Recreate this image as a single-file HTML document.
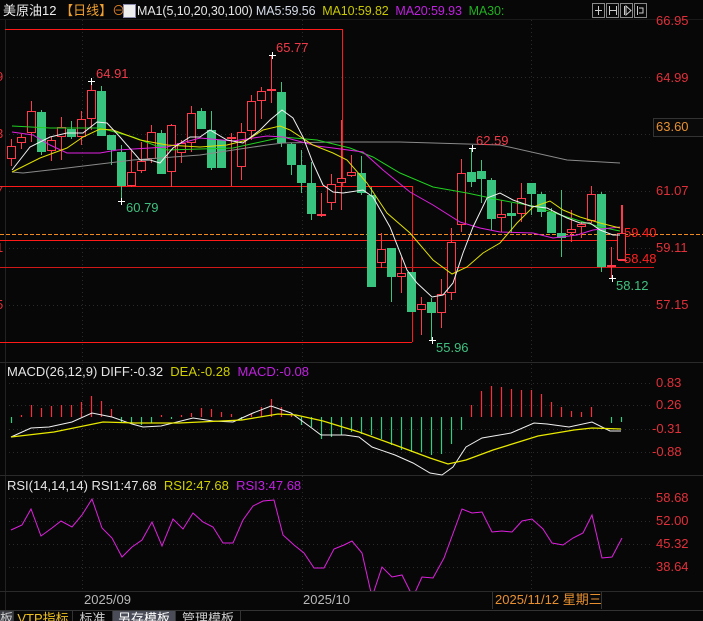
<!DOCTYPE html>
<html><head><meta charset="utf-8"><style>
html,body{margin:0;padding:0;background:#070707;width:703px;height:621px;overflow:hidden}
body{position:relative;font-family:"Liberation Sans","Noto Sans CJK SC",sans-serif}
.t{position:absolute;white-space:nowrap;font-size:12px;line-height:14px}
.tab{position:absolute;top:611px;height:12px;font-size:13px;line-height:16px;color:#ccc;border-right:1px solid #333;text-align:center;overflow:hidden}
</style></head><body>
<svg id="s" width="703" height="621" style="position:absolute;left:0;top:0" xmlns="http://www.w3.org/2000/svg"></svg>

<div class="t" style="left:3px;top:4px;color:#eee;font-size:13px">美原油12 <span style="color:#f0a030">【日线】</span><span style="color:#e08020">⊖</span></div>
<div style="position:absolute;left:123px;top:4px;width:11px;height:12px;background:#eee;border:1px solid #88a"></div>
<div class="t" style="left:137px;top:4px;font-size:12.5px;letter-spacing:-0.1px"><span style="color:#e6e6e6">MA1(5,10,20,30,100)</span> <span style="color:#d6dce8">MA5:59.56</span>&nbsp;&nbsp;<span style="color:#c8c800">MA10:59.82</span>&nbsp;&nbsp;<span style="color:#c020e0">MA20:59.93</span>&nbsp;&nbsp;<span style="color:#20b020">MA30:</span></div>

<div class="t" style="left:656px;top:14px;color:#e0303a;font-size:13px">66.95</div>
<div class="t" style="left:656px;top:71px;color:#e0303a;font-size:13px">64.99</div>
<div style="position:absolute;left:653px;top:118px;width:50px;height:17px;border:1px solid #333;background:#0a0a0a"></div>
<div class="t" style="left:656px;top:120px;color:#e89030;font-size:13px">63.60</div>
<div class="t" style="left:656px;top:184px;color:#e0303a;font-size:13px">61.07</div>
<div class="t" style="left:656px;top:241px;color:#e0303a;font-size:13px">59.11</div>
<div class="t" style="left:656px;top:298px;color:#e0303a;font-size:13px">57.15</div>
<div class="t" style="left:624px;top:226px;color:#ff2020;font-size:13px">59.40</div>
<div class="t" style="left:624px;top:252px;color:#ff2020;font-size:13px">58.48</div>
<div class="t" style="left:616px;top:279px;color:#40c080;font-size:13px">58.12</div>
<div class="t" style="left:96px;top:67px;color:#f03a4a;font-size:13px">64.91</div>
<div class="t" style="left:276px;top:41px;color:#f03a4a;font-size:13px">65.77</div>
<div class="t" style="left:126px;top:201px;color:#40c080;font-size:13px">60.79</div>
<div class="t" style="left:476px;top:134px;color:#f03a4a;font-size:13px">62.59</div>
<div class="t" style="left:436px;top:341px;color:#40c080;font-size:13px">55.96</div>

<div class="t" style="left:7px;top:365px;font-size:13px"><span style="color:#e6e6e6">MACD(26,12,9) DIFF:-0.32</span>&nbsp;&nbsp;<span style="color:#d0d000">DEA:-0.28</span>&nbsp;&nbsp;<span style="color:#c020e0">MACD:-0.08</span></div>
<div class="t" style="left:656px;top:376px;color:#e0303a;font-size:13px">0.83</div>
<div class="t" style="left:656px;top:398px;color:#e0303a;font-size:13px">0.26</div>
<div class="t" style="left:652px;top:422px;color:#e0303a;font-size:13px">-0.31</div>
<div class="t" style="left:652px;top:445px;color:#e0303a;font-size:13px">-0.88</div>

<div class="t" style="left:7px;top:479px;font-size:13px"><span style="color:#e6e6e6">RSI(14,14,14) RSI1:47.68</span>&nbsp;&nbsp;<span style="color:#d0d000">RSI2:47.68</span>&nbsp;&nbsp;<span style="color:#c020e0">RSI3:47.68</span></div>
<div class="t" style="left:656px;top:491px;color:#e0303a;font-size:13px">58.68</div>
<div class="t" style="left:656px;top:514px;color:#e0303a;font-size:13px">52.00</div>
<div class="t" style="left:656px;top:537px;color:#e0303a;font-size:13px">45.32</div>
<div class="t" style="left:656px;top:560px;color:#e0303a;font-size:13px">38.64</div>

<div class="t" style="left:84px;top:593px;color:#b8b8b8;font-size:13px">2025/09</div>
<div class="t" style="left:303px;top:593px;color:#b8b8b8;font-size:13px">2025/10</div>
<div style="position:absolute;left:492px;top:592px;width:108px;height:17px;border-left:1px solid #333;border-right:1px solid #333"></div>
<div class="t" style="left:495px;top:593px;color:#e89030;font-size:13px">2025/11/12 星期三</div>

<div class="tab" style="left:0;width:13px;background:#3a3c44">板</div>
<div class="tab" style="left:14px;width:58px;color:#f0c020">VTP指标</div>
<div class="tab" style="left:73px;width:39px">标准</div>
<div class="tab" style="left:113px;width:62px;background:#4a4d58;color:#fff">另存模板</div>
<div class="tab" style="left:176px;width:64px">管理模板</div>

<script>
var s=document.getElementById('s'),h='';
function L(x1,y1,x2,y2,c,w,d){h+='<line x1="'+x1+'" y1="'+y1+'" x2="'+x2+'" y2="'+y2+'" stroke="'+c+'" stroke-width="'+(w||1)+'"'+(d?' stroke-dasharray="'+d+'"':'')+'/>';}
function P(pts,c,w){h+='<polyline fill="none" stroke="'+c+'" stroke-width="'+(w||1)+'" points="'+pts+'"/>';}
[77,134,191,248,305,383,405,429,452,498,521,544,567].forEach(function(y){L(5,y+.5,652,y+.5,'#2a2a2a',1,'1,3');});
[82,302,531].forEach(function(x){L(x+.5,20,x+.5,591,'#2a2a2a',1,'1,3');});
L(5.5,20,5.5,611,'#222');
L(0,362.5,703,362.5,'#2a2a2a');L(0,475.5,703,475.5,'#2a2a2a');L(0,591.5,703,591.5,'#2a2a2a');L(0,610.5,703,610.5,'#333');
L(0,19.5,703,19.5,'#1a1a1a');
L(5,29.5,342,29.5,'#ff1a1a');L(342.5,29,342.5,186,'#ff1a1a');
L(0,186.5,412,186.5,'#ff1a1a');L(412.5,186,412.5,342,'#ff1a1a');L(0,342.5,412,342.5,'#ff1a1a');
L(0,240.5,622,240.5,'#ff1a1a');L(0,267.5,654,267.5,'#d01818');
L(0,234.5,703,234.5,'#f08a20',1,'4,2');
L(622.5,205,622.5,260,'#ff3a4a');L(618,260.5,627,260.5,'#ff3a4a');
var C=[['r',146,159,139,166],['r',137,143,134,149],['r',111,133,101,142],['g',112,152,110,155],['r',140,151,137,161],['r',127,137,117,160],['g',129,137,121,139],['r',119,137,111,145],['r',90,119,81,130],['g',91,136,86,136],
['g',135,150,135,165],['g',152,186,145,201],['r',172,186,150,187],['r',161,171,142,173],['r',132,159,125,163],['g',133,174,130,174],['r',125,172,124,187],['r',143,153,140,163],['r',113,143,106,152],['g',111,129,108,129],
['g',130,168,111,170],['g',140,168,140,168],['r',137,138,133,186],['r',132,167,123,180],['r',101,131,95,140],['r',91,101,87,119],['r',89,90,55,103],['g',92,143,82,147],['g',144,165,143,175],['g',165,183,150,193],
['g',183,214,162,220],['r',214,215,193,217],['r',184,203,174,210],['r',178,183,120,210],['r',172,176,155,177],['g',173,193,156,195],['g',195,287,187,287],['r',249,263,233,268],['g',248,277,248,302],['r',273,277,257,293],
['g',272,312,272,312],['r',304,310,297,335],['g',302,313,298,340],['r',294,313,279,328],['r',242,293,228,300],['r',173,225,159,232],['g',172,182,148,187],['g',171,179,160,203],['g',180,219,178,230],['r',214,218,200,232],
['g',213,216,203,233],['r',198,214,183,222],['g',183,194,183,215],['g',194,212,192,217],['g',212,233,208,233],['g',233,238,190,257],['r',229,233,210,242],['r',224,227,222,238],['r',194,221,186,223],['g',194,267,192,272],
['r',265,267,247,278],['r',233,260,205,260]];
C.forEach(function(c,i){var x=11+i*10;var col=c[0]=='r'?'#ff3a4a':'#38c47e';
 L(x+.5,c[3],x+.5,c[4],col);
 var bh=Math.max(1,c[2]-c[1]);
 if(c[0]=='r'){ if(bh<=2) h+='<rect x="'+(x-4)+'" y="'+c[1]+'" width="9" height="2" fill="'+col+'"/>'; else h+='<rect x="'+(x-3.5)+'" y="'+(c[1]+.5)+'" width="8" height="'+(bh-1)+'" fill="#070707" stroke="'+col+'"/>';}
 else h+='<rect x="'+(x-4)+'" y="'+c[1]+'" width="9" height="'+bh+'" fill="'+col+'"/>';
});
[[91,81],[272,55],[121,201],[472,148],[432,340],[612,278]].forEach(function(p){L(p[0]-3,p[1]+.5,p[0]+4,p[1]+.5,'#fff');L(p[0]+.5,p[1]-3,p[0]+.5,p[1]+4,'#fff');});
P('12,172 23,173 67,168 133,160 200,155 267,145 283,143 333,142 400,142 500,145 567,160 620,163','#8a8a8a');
P('12,126 50,128 100,128 133,137 167,150 233,148 283,137 317,140 350,148 373,157 400,173 433,187 467,193 500,200 533,206 567,217 600,227 620,231','#20d020');
P('12,132 33,135 50,145 67,153 100,153 117,150 167,147 200,138 233,141 267,136 283,137 317,146 333,148 363,152 383,170 410,192 433,205 460,222 480,228 500,232 533,233 553,238 577,235 593,230 620,227','#e020e0');
P('12,172 40,158 67,148 83,137 100,129 113,130 140,140 167,145 200,147 227,145 247,140 263,130 280,126 290,130 313,145 333,153 347,160 367,183 387,213 410,233 433,260 452,274 467,267 483,253 500,243 517,223 533,207 550,201 563,210 580,217 600,223 620,228','#e0e000');
P('12,170 30,147 50,137 67,133 83,133 97,122 107,123 120,137 140,160 150,160 160,163 173,148 190,137 200,137 210,130 227,140 243,143 260,130 270,120 282,110 293,118 303,137 313,163 323,185 333,192 343,193 363,190 373,197 390,227 407,270 417,283 432,297 443,295 453,283 463,253 473,227 487,198 500,193 513,200 530,206 547,208 567,218 580,223 590,223 600,230 613,235 620,235','#f0f0f0');
var M=[-6,2,12,9,11,12,12,15,21,16,8,-6,-6,-8,-6,2,-2,2,4,9,8,5,3,-3,3,10,18,10,3,-8,-10,-22,-20,-18,-15,-17,-18,-22,-28,-33,-35,-35,-38,-37,-27,-13,12,26,31,30,28,27,27,23,15,10,6,5,10,0,-6,-5];
M.forEach(function(v,i){var x=11+i*10+.5;if(v>0)L(x,417-v,x,417,'#ff2a40',1.2);else if(v<0)L(x,417,x,417-v,'#2ed080',1.2);});
P('11,437 31,428 49,427 72,422 92,413 112,417 132,424 143,427 161,426 173,423 193,418 213,421 233,422 253,413 271,406 291,413 309,426 321,435 345,435 359,437 372,447 395,455 413,463 430,473 442,475 453,467 466,447 482,438 511,433 534,423 547,424 569,427 592,422 610,431 621,431','#f0f0f0');
P('11,437 54,432 103,422 135,423 179,423 242,420 278,414 296,415 323,421 359,432 395,445 430,458 448,464 466,460 493,450 538,436 574,430 592,428 621,429','#e8e800',1.3);
h+='<clipPath id="c"><rect x="0" y="476" width="703" height="115"/></clipPath>';
h+='<g clip-path="url(#c)">';
P('11,530 22,525 31,509 41,536 52,528 61,521 72,527 82,515 92,499 102,528 112,538 122,557 132,547 142,540 152,522 162,546 173,519 183,529 193,513 203,522 213,527 223,543 233,543 243,520 253,506 263,501 274,500 283,535 294,545 304,553 314,568 324,568 334,549 344,545 352,541 362,553 372,597 382,567 392,577 402,575 413,597 422,577 433,578 444,558 462,509 472,513 482,512 492,532 502,531 512,532 522,521 532,519 543,529 552,543 563,545 573,538 583,533 592,515 602,558 612,557 622,538','#e020e0');
h+='</g>';
[592,606,620,634].forEach(function(x){h+='<rect x="'+x+'.5" y="3.5" width="12" height="14" fill="none" stroke="#888"/>';});
L(598.5,6,598.5,15,'#ccc');L(595,10.5,602,10.5,'#ccc');
L(610,10.5,616,10.5,'#ccc');L(609.5,6,609.5,15,'#ccc');L(616.5,6,616.5,15,'#ccc');
h+='<path d="M624.5 6 V15 M626 6 L631 10.5 L626 15Z" stroke="#ccc" fill="none"/>';
h+='<path d="M637.5 6 V15 M639 8 H643 V13 H639" stroke="#ccc" fill="none"/>';
s.innerHTML=h;
</script>
<div class="t" style="left:-4px;top:70px;color:#e0303a;font-size:13px">9</div>
<div class="t" style="left:-4px;top:127px;color:#e0303a;font-size:13px">3</div>
<div class="t" style="left:-4px;top:184px;color:#e0303a;font-size:13px">7</div>
<div class="t" style="left:-4px;top:241px;color:#e0303a;font-size:13px">1</div>
<div class="t" style="left:-4px;top:298px;color:#e0303a;font-size:13px">5</div>
</body></html>
